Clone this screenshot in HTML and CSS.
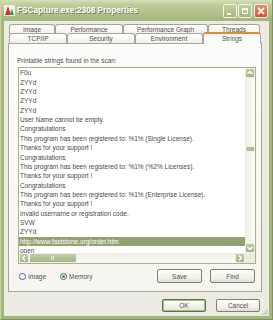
FILE: index.html
```html
<!DOCTYPE html>
<html lang="en">
<head>
    <meta charset="UTF-8">
    <title>FSCapture.exe:2308 Properties</title>
    <link rel="stylesheet" href="styles.css">
</head>
<body>
    <div class="window">
        <div class="titlebar">
            <svg class="app-icon" width="11" height="11" viewBox="0 0 11 11">
                <rect x="0" y="0" width="11" height="11" fill="#f4f4ee"/>
                <polygon points="1,10 4,1 7,10" fill="#d8302a"/>
                <polygon points="5,10 8,4 10,10" fill="#3f9a3a"/>
            </svg>
            <span class="title">FSCapture.exe:2308 Properties</span>
            <div class="caption-buttons">
                <div class="cap-btn">
                    <svg width="12" height="12" viewBox="0 0 12 12"><rect x="3" y="8" width="4" height="2" fill="#fff"/></svg>
                </div>
                <div class="cap-btn">
                    <svg width="12" height="12" viewBox="0 0 12 12"><rect x="3.5" y="3.5" width="5" height="5" fill="none" stroke="#fff"/><rect x="3" y="3" width="6" height="2" fill="#fff"/></svg>
                </div>
                <div class="cap-btn close">
                    <svg width="12" height="12" viewBox="0 0 12 12"><path d="M3 3 L9 9 M9 3 L3 9" stroke="#fff" stroke-width="1.8"/></svg>
                </div>
            </div>
        </div>

        <div class="client">
            <div class="tabrow back">
                <div class="tab" style="width:46px">Image</div>
                <div class="tab" style="width:68px">Performance</div>
                <div class="tab" style="width:85px">Performance Graph</div>
                <div class="tab" style="width:52px">Threads</div>
            </div>
            <div class="tabrow front">
                <div class="tab" style="width:58px">TCP/IP</div>
                <div class="tab" style="width:68px">Security</div>
                <div class="tab" style="width:68px">Environment</div>
                <div class="tab active" style="width:58px">Strings</div>
            </div>

            <div class="panel">
                <div class="label">Printable strings found in the scan:</div>
                <div class="listbox">
                    <div class="lines">
                        <div>F0u</div>
                        <div>ZYYd</div>
                        <div>ZYYd</div>
                        <div>ZYYd</div>
                        <div>ZYYd</div>
                        <div>User Name cannot be empty.</div>
                        <div>Congratulations</div>
                        <div>This program has been registered to: %1% (Single License).</div>
                        <div>Thanks for your support !</div>
                        <div>Congratulations</div>
                        <div>This program has been registered to: %1% (%2% Licenses).</div>
                        <div>Thanks for your support !</div>
                        <div>Congratulations</div>
                        <div>This program has been registered to: %1% (Enterprise License).</div>
                        <div>Thanks for your support !</div>
                        <div>Invalid username or registration code.</div>
                        <div>SVW</div>
                        <div>ZYYd</div>
                        <div class="sel">http://www.faststone.org/order.htm</div>
                        <div>open</div>
                    </div>
                    <div class="vscroll">
                        <div class="sb-btn">
                            <svg width="10" height="10" viewBox="0 0 10 10"><path d="M2.5 6 L5 3.5 L7.5 6" fill="none" stroke="#fff" stroke-width="1.5"/></svg>
                        </div>
                        <div class="vtrack">
                            <div class="vthumb"></div>
                        </div>
                        <div class="sb-btn">
                            <svg width="10" height="10" viewBox="0 0 10 10"><path d="M2.5 4 L5 6.5 L7.5 4" fill="none" stroke="#fff" stroke-width="1.5"/></svg>
                        </div>
                    </div>
                    <div class="hscroll">
                        <div class="sb-btn">
                            <svg width="10" height="10" viewBox="0 0 10 10"><path d="M6 2.5 L3.5 5 L6 7.5" fill="none" stroke="#fff" stroke-width="1.5"/></svg>
                        </div>
                        <div class="htrack">
                            <div class="hthumb"><span class="grip"></span></div>
                        </div>
                        <div class="sb-btn">
                            <svg width="10" height="10" viewBox="0 0 10 10"><path d="M4 2.5 L6.5 5 L4 7.5" fill="none" stroke="#fff" stroke-width="1.5"/></svg>
                        </div>
                    </div>
                    <div class="corner"></div>
                </div>
                <div class="panel-bottom">
                    <label class="radio"><span class="dot"></span>Image</label>
                    <label class="radio checked"><span class="dot"></span>Memory</label>
                    <div class="spacer"></div>
                    <button class="btn">Save</button>
                    <button class="btn">Find</button>
                </div>
            </div>

            <div class="dialog-buttons">
                <button class="btn default">OK</button>
                <button class="btn">Cancel</button>
            </div>
            <div class="grip-corner"></div>
        </div>
    </div>
</body>
</html>
```

FILE: styles.css
```css
body {
    margin: 0;
    font-family: "Liberation Sans", Arial, sans-serif;
    background: #fff;
}
.window {
    width: 273px;
    height: 320px;
    display: flex;
    flex-direction: column;
    background: #a3b57d;
    box-sizing: border-box;
    border-left: 1px solid #c6d2a8;
    border-right: 1px solid #7f925c;
    border-bottom: 1px solid #7f925c;
}
.titlebar {
    height: 21px;
    display: flex;
    align-items: center;
    padding: 0 4px 0 3px;
    background: linear-gradient(#d5dfba, #bccb98 25%, #afbf8a 70%, #a2b37c);
}
.app-icon {
    flex: none;
    margin-right: 2px;
}
.title {
    font-weight: bold;
    font-size: 8.2px;
    color: #fff;
    text-shadow: 1px 1px 0 #6f7f52;
    flex: 1;
    white-space: nowrap;
}
.caption-buttons {
    display: flex;
    gap: 1px;
}
.cap-btn {
    width: 12px;
    height: 12px;
    border: 1px solid #f2f5ea;
    border-radius: 2px;
    background: linear-gradient(#c4d0a0, #a3b57b);
    display: flex;
}
.cap-btn.close {
    margin-left: 1px;
    background: linear-gradient(#ee8d68, #d6532c);
}
.client {
    flex: 1;
    margin: 0 3px 3px 3px;
    background: #ecebe1;
    padding: 3px 7px 0 4px;
    display: flex;
    flex-direction: column;
    position: relative;
}
.tabrow {
    display: flex;
    padding-left: 1px;
}
.tabrow.back {
    height: 9px;
}
.tabrow.front {
    height: 10px;
    position: relative;
    z-index: 1;
}
.tab {
    box-sizing: border-box;
    height: 10px;
    border: 1px solid #a3a895;
    border-bottom: none;
    border-radius: 3px 3px 0 0;
    background: linear-gradient(#fefefe, #f1f0ea);
    font-size: 6.5px;
    color: #505050;
    text-align: center;
    line-height: 9px;
    white-space: nowrap;
}
.tab.active {
    height: 12px;
    margin-top: -1px;
    border-top: 2px solid #e4892e;
    background: #fcfcfa;
    line-height: 9px;
}
.panel {
    box-sizing: border-box;
    height: 249px;
    border: 1px solid #a3a895;
    background: linear-gradient(#fcfcfa, #f6f5ef);
    padding: 12px 0 0 8px;
}
.label {
    font-size: 6.5px;
    line-height: 10px;
    color: #505050;
}
.listbox {
    box-sizing: border-box;
    width: 238px;
    height: 197px;
    margin: 1px 0 0 1px;
    border: 1px solid #a4b38b;
    background: #fff;
    display: grid;
    grid-template-columns: 1fr 10px;
    grid-template-rows: 1fr 10px;
}
.lines {
    overflow: hidden;
    font-size: 6.5px;
    line-height: 9.36px;
    color: #4a4a4a;
    white-space: nowrap;
    padding-top: 0.3px;
}
.lines div {
    padding-left: 1px;
}
.lines .sel {
    background: #93a271;
    color: #fff;
}
.vscroll {
    display: flex;
    flex-direction: column;
    background: linear-gradient(90deg, #eeeee6, #fbfbf8);
}
.hscroll {
    display: flex;
    background: linear-gradient(#eeeee6, #fbfbf8);
}
.sb-btn {
    flex: none;
    width: 10px;
    height: 10px;
    box-sizing: border-box;
    border-radius: 2px;
    background: linear-gradient(#c0cba3, #a3b283);
    border: 1px solid #eef1e4;
    display: flex;
    align-items: center;
    justify-content: center;
}
.sb-btn svg {
    flex: none;
}
.vtrack {
    flex: 1;
}
.vthumb {
    margin-top: 68px;
    height: 6px;
    border-radius: 2px;
    background: linear-gradient(90deg, #c2cda6, #a7b587);
    border: 1px solid #eef1e4;
    box-sizing: border-box;
}
.htrack {
    flex: 1;
    display: flex;
}
.hthumb {
    width: 48px;
    height: 10px;
    box-sizing: border-box;
    border-radius: 2px;
    background: linear-gradient(#c2cda6, #a7b587);
    border: 1px solid #eef1e4;
    display: flex;
    align-items: center;
    justify-content: center;
}
.grip {
    width: 4px;
    height: 4px;
    background: repeating-linear-gradient(90deg, #e7ecd9 0 1px, transparent 1px 2px);
}
.corner {
    background: #ecebe1;
}
.panel-bottom {
    display: flex;
    align-items: center;
    width: 238px;
    height: 14px;
    margin: 5px 0 0 1px;
    padding-right: 1px;
    box-sizing: border-box;
}
.radio {
    display: flex;
    align-items: center;
    font-size: 6.5px;
    color: #505050;
    margin-left: 1px;
    width: 40px;
}
.dot {
    width: 7px;
    height: 7px;
    box-sizing: border-box;
    border: 1px solid #3c5f93;
    border-radius: 50%;
    background: #fff;
    margin-right: 2px;
    display: flex;
    align-items: center;
    justify-content: center;
}
.radio.checked .dot::after {
    content: "";
    width: 3px;
    height: 3px;
    border-radius: 50%;
    background: #4f8f3a;
}
.spacer {
    flex: 1;
}
.btn {
    box-sizing: border-box;
    width: 45px;
    height: 14px;
    padding: 0;
    margin-left: 8px;
    font-family: "Liberation Sans", Arial, sans-serif;
    font-size: 6.5px;
    color: #505050;
    border: 1px solid #7b8569;
    border-radius: 2px;
    background: linear-gradient(#ffffff, #f0efe8 70%, #dedccf);
}
.dialog-buttons {
    display: flex;
    justify-content: flex-end;
    margin-top: 7px;
    padding-right: 2px;
}
.dialog-buttons .btn {
    width: 44px;
    height: 13px;
    margin-left: 10px;
}
.btn.default {
    box-shadow: inset 0 0 0 1px #a5c17d;
    border-color: #5a7046;
}
.grip-corner {
    position: absolute;
    right: 1px;
    bottom: 1px;
    width: 7px;
    height: 7px;
    background: radial-gradient(circle, #b9b8a8 0.6px, transparent 0.8px) 0 0 / 2px 2px;
    clip-path: polygon(100% 0, 100% 100%, 0 100%);
}
```
